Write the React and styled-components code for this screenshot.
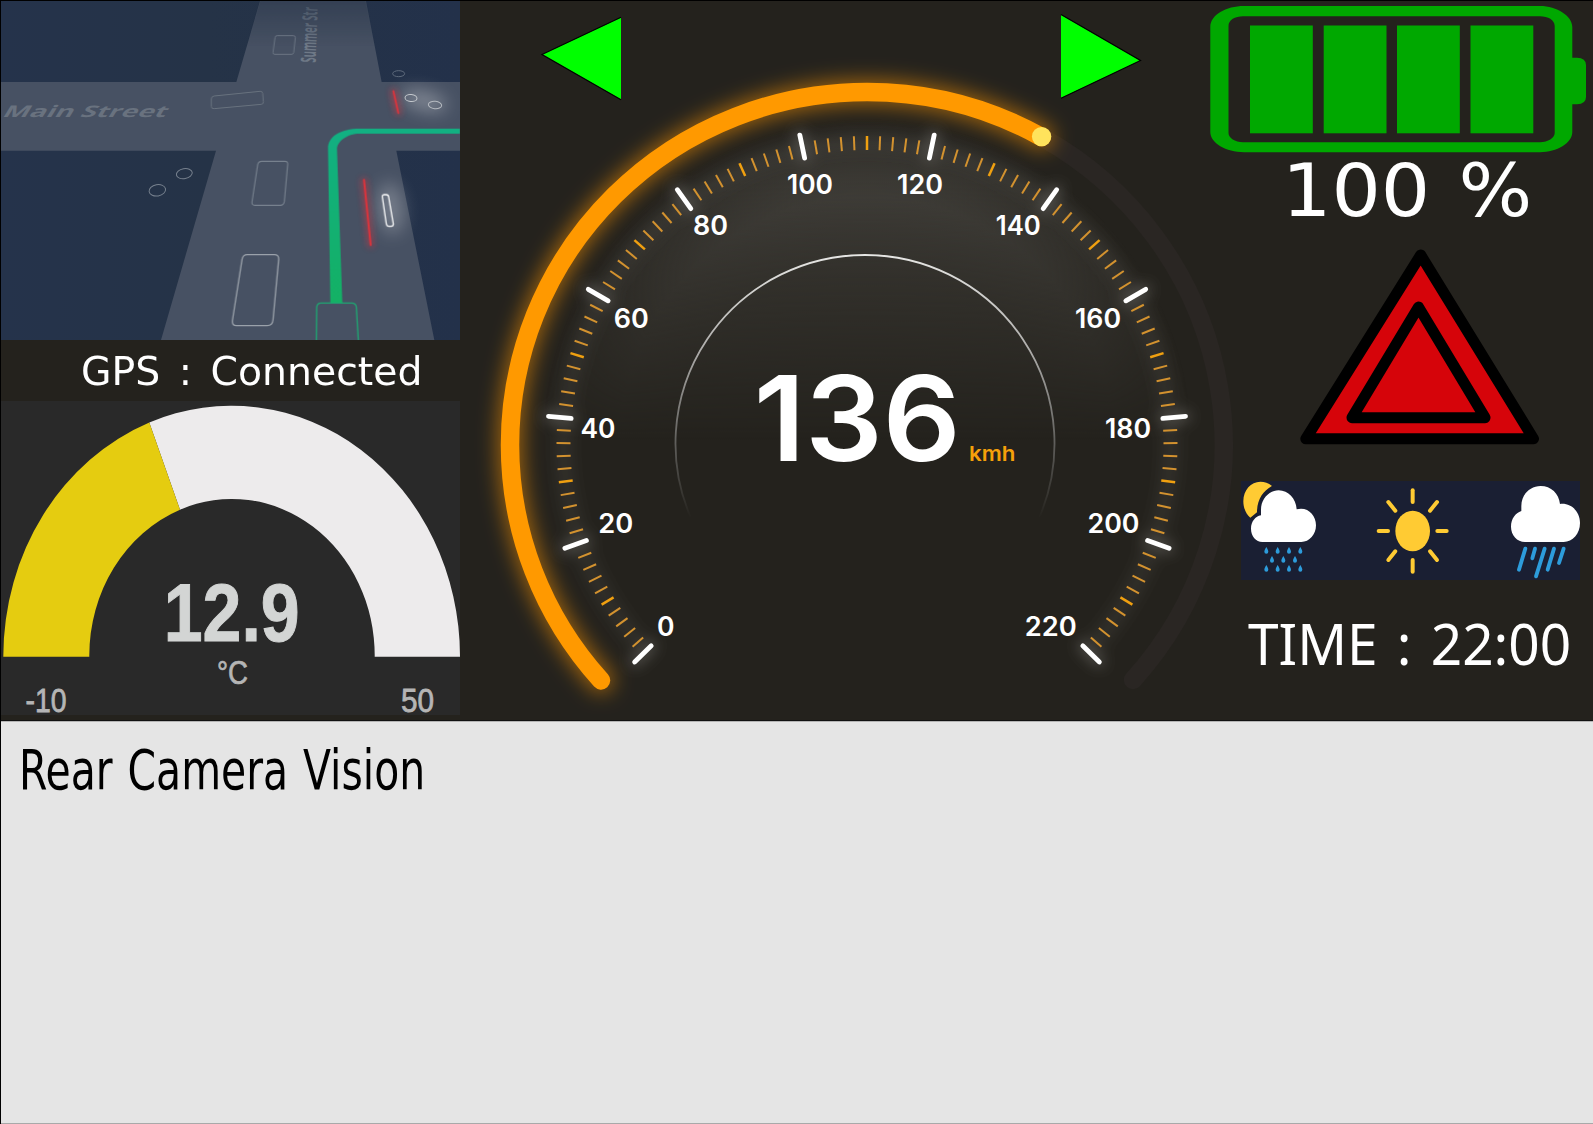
import React from "react";
import styled, { createGlobalStyle } from "styled-components";

const GlobalStyle = createGlobalStyle`
  *, *::before, *::after { box-sizing: border-box; }
  html, body { margin: 0; padding: 0; background: #24221d; overflow: hidden; }
  svg { display: block; }
`;

const uiFont = `Verdana, "DejaVu Sans", sans-serif`;

const Screen = styled.div`
  width: 1593px;
  height: 1124px;
  display: grid;
  grid-template-rows: 720px 1fr;
  border: solid #000;
  border-width: 1px 0 0 1px;
  background: #24221d;
  overflow: hidden;
`;

const Dashboard = styled.main`
  display: grid;
  grid-template-columns: 459px 744px 1fr;
  border-bottom: 1px solid #111;
`;

const SideColumn = styled.section`
  display: flex;
  flex-direction: column;
  position: relative;
  z-index: 1;
`;

const InfoColumn = styled(SideColumn)`
  padding: 5px 0 0 6px;
`;

const Label = styled.span`
  display: block;
  width: max-content;
  font-family: ${(p) => p.$font || uiFont};
  font-size: ${(p) => p.$size}px;
  line-height: ${(p) => p.$line}px;
  color: ${(p) => p.$color || "#fff"};
  white-space: pre;
  word-spacing: ${(p) => p.$gap || 0}px;
  margin-left: ${(p) => p.$indent}px;
  transform: scaleX(${(p) => p.$stretch});
  transform-origin: left center;
`;

const Map = styled.svg`
  width: 459px;
  height: 339px;
`;

const GpsStatus = styled.div`
  height: 61px;
  padding-top: 9px;
`;

const Thermometer = styled.svg`
  width: 459px;
  height: 314px;
  background: #292929;
  overflow: visible;
`;

const Cluster = styled.section`
  display: grid;
  grid-template: 719px / 744px;
`;

const Speedometer = styled.svg`
  grid-area: 1 / 1;
  width: 744px;
  height: 719px;
  overflow: visible;
`;

const Indicators = styled.div`
  grid-area: 1 / 1;
  align-self: start;
  display: flex;
  justify-content: space-between;
  padding: 12px 62px 0 79px;
`;

const Arrow = styled.svg`
  width: 83px;
  height: 89px;
`;

const Battery = styled.svg`
  width: 377px;
  height: 147px;
`;

const Percent = styled.div`
  height: 84px;
`;

const Hazard = styled.svg`
  width: 240px;
  height: 200px;
  margin: 8px 0 0 89px;
`;

const Weather = styled.div`
  display: flex;
  justify-content: space-between;
  width: 339px;
  height: 99px;
  margin: 36px 0 0 31px;
  background: #1a1f33;
`;

const WeatherIcon = styled.svg`
  width: ${(p) => p.$width}px;
  height: 99px;
`;

const Clock = styled.div`
  margin-top: 25px;
`;

const Camera = styled.section`
  background: #e5e5e5;
  border-top: 1px solid #b4b4b4;
  border-bottom: 1px solid #a9a9a9;
  padding: 15px 0 0 17px;
`;

const rad = (d) => (d * Math.PI) / 180;
const CX = 867;
const CY = 444.5;
const dialPoint = (value, rx, ry) => {
  const a = rad(((value - 110) * 133.4) / 110);
  return [CX + Math.sin(a) * rx, CY - Math.cos(a) * ry];
};

const tickLine = (value) => {
  const major = value % 20 === 0;
  const [x1, y1] = major ? dialPoint(value, 319.8, 316.5) : dialPoint(value, 310.5, 308.5);
  const [x2, y2] = major ? dialPoint(value, 297, 293) : dialPoint(value, 296.5, 294.5);
  return { value, major, mid: value % 10 === 0, x1, y1, x2, y2 };
};

const ticks = Array.from({ length: 111 }, (_, i) => tickLine(i * 2));

const speedArc =
  "M601 680.4 A357 353 0 0 1 510 445 A357 353 0 0 1 867 92 A357 353 0 0 1 1041.7 137.1";

const dialLabels = [
  [0, 665.7, 635.5, 17.5],
  [20, 615.7, 532.5, 35],
  [40, 597.9, 437.7, 35],
  [60, 631.3, 327.6, 35],
  [80, 710.5, 235, 35],
  [100, 810, 194, 46],
  [120, 920, 194, 46],
  [140, 1018.3, 235, 45],
  [160, 1098, 327.6, 46],
  [180, 1128, 437.7, 46],
  [200, 1113.5, 532.5, 52],
  [220, 1050.8, 635.5, 52],
];

function Dial() {
  return (
    <Speedometer viewBox="460 1 744 719">
      <defs>
        <radialGradient id="sheen" gradientUnits="userSpaceOnUse" cx="867" cy="444" r="325">
          <stop offset="0" stopColor="#3f3d38" stopOpacity="0.75" />
          <stop offset="0.55" stopColor="#3f3d38" stopOpacity="0.85" />
          <stop offset="0.76" stopColor="#3f3d38" />
          <stop offset="0.88" stopColor="#3f3d38" stopOpacity="0.65" />
          <stop offset="1" stopColor="#3f3d38" stopOpacity="0" />
        </radialGradient>
        <linearGradient id="fade" gradientUnits="userSpaceOnUse" x1="0" y1="180" x2="0" y2="440">
          <stop offset="0" stopColor="#fff" />
          <stop offset="0.3" stopColor="#b4b4b4" />
          <stop offset="0.65" stopColor="#5c5c5c" />
          <stop offset="1" stopColor="#000" />
        </linearGradient>
        <mask id="topLight" maskUnits="userSpaceOnUse" x="530" y="110" width="680" height="340">
          <rect x="530" y="110" width="680" height="340" fill="url(#fade)" />
        </mask>
        <linearGradient id="ring" gradientUnits="userSpaceOnUse" x1="0" y1="255" x2="0" y2="518">
          <stop offset="0" stopColor="#e6e6e4" />
          <stop offset="0.35" stopColor="#b0afad" />
          <stop offset="0.7" stopColor="#63625f" />
          <stop offset="1" stopColor="#24221d" />
        </linearGradient>
        <filter id="arcGlow" filterUnits="userSpaceOnUse" x="440" y="30" width="680" height="730">
          <feGaussianBlur stdDeviation="10" />
        </filter>
        <filter id="tickGlow" filterUnits="userSpaceOnUse" x="500" y="80" width="740" height="640">
          <feGaussianBlur stdDeviation="7" />
        </filter>
      </defs>
      <circle cx="867" cy="444" r="325" fill="url(#sheen)" mask="url(#topLight)" />
      <path d="M1041.7 137.2 A357 353 0 0 1 1133 680" fill="none" stroke="#2a2623" strokeWidth="18.5" strokeLinecap="round" />
      <g filter="url(#tickGlow)" stroke="#77756f" strokeLinecap="round">
        {ticks.map((t) => (
          <line key={t.value} x1={t.x1} y1={t.y1} x2={t.x2} y2={t.y2} strokeWidth={t.major ? 10 : 4} strokeOpacity={t.major ? 0.6 : 0.5} />
        ))}
      </g>
      <path d={speedArc} fill="none" stroke="#ff9800" strokeOpacity="0.55" strokeWidth="25" strokeLinecap="round" filter="url(#arcGlow)" />
      <path d={speedArc} fill="none" stroke="#ff9900" strokeWidth="18.5" strokeLinecap="round" />
      <circle cx="1041.6" cy="136.6" r="9.7" fill="#ffe35c" />
      {ticks.map((t) => (
        <line
          key={t.value}
          x1={t.x1}
          y1={t.y1}
          x2={t.x2}
          y2={t.y2}
          stroke={t.major ? "#fff" : t.mid ? "#f0a010" : "#d3922f"}
          strokeWidth={t.major ? 4.8 : t.mid ? 2.5 : 2}
          strokeLinecap={t.major ? "round" : "butt"}
        />
      ))}
      <path d="M690.5 517 A189.5 188.5 0 1 1 1039.5 517" fill="none" stroke="url(#ring)" strokeWidth="1.8" />
      <g fill="#fff" fontFamily="Inter, sans-serif" fontWeight="600" textAnchor="middle">
        {dialLabels.map(([v, x, y, w]) => (
          <text key={v} x={x} y={y} fontSize="26.5" textLength={w} lengthAdjust="spacingAndGlyphs">{v}</text>
        ))}
        <text x="857.3" y="460.5" fontSize="118" textLength="207" lengthAdjust="spacingAndGlyphs">136</text>
        <text x="992.3" y="461" fontSize="20.5" fill="#f5a00a" textLength="46.5" lengthAdjust="spacingAndGlyphs">kmh</text>
      </g>
    </Speedometer>
  );
}

const trafficBox = { fill: "none", strokeLinejoin: "round" };

function Navigation() {
  return (
    <Map viewBox="3 3 1377 1017" preserveAspectRatio="none">
      <defs>
        <linearGradient id="land" x1="0" y1="0" x2="1" y2="0">
          <stop offset="0" stopColor="#25334b" />
          <stop offset="0.45" stopColor="#253347" />
          <stop offset="1" stopColor="#23314a" />
        </linearGradient>
        <linearGradient id="haze" x1="0" y1="0" x2="0" y2="1">
          <stop offset="0" stopColor="#253347" stopOpacity="0.55" />
          <stop offset="1" stopColor="#253347" stopOpacity="0" />
        </linearGradient>
        <linearGradient id="route" gradientUnits="userSpaceOnUse" x1="0" y1="386" x2="0" y2="909">
          <stop offset="0" stopColor="#12b083" />
          <stop offset="1" stopColor="#14b165" />
        </linearGradient>
        <filter id="soft" x="-100%" y="-50%" width="300%" height="200%">
          <feGaussianBlur stdDeviation="26" />
        </filter>
        <filter id="redSoft" filterUnits="userSpaceOnUse" x="1030" y="220" width="260" height="580">
          <feGaussianBlur stdDeviation="9" />
        </filter>
      </defs>
      <rect x="3" y="3" width="1377" height="1017" fill="url(#land)" />
      <path d="M780 3 H1098 L1145 246 H1380 V452 H1189 L1303 1020 H483 L648 452 H3 V246 H709 Z" fill="#475163" />
      <g fill="#fff" filter="url(#soft)">
        <ellipse cx="1272" cy="302" rx="70" ry="28" transform="rotate(14 1272 302)" opacity="0.32" />
        <ellipse cx="1172" cy="625" rx="38" ry="78" transform="rotate(-6 1172 625)" opacity="0.26" />
      </g>
      <text transform="translate(4 350) skewX(-32)" fontFamily='"Open Sans", sans-serif' fontWeight="700" fontSize="48" fill="#69727f" textLength="490" lengthAdjust="spacingAndGlyphs">Main Street</text>
      <text transform="translate(947 188) rotate(-88)" fontFamily='"Open Sans", sans-serif' fontWeight="700" fontSize="63" fill="#6f7987" textLength="166" lengthAdjust="spacingAndGlyphs">Summer Str</text>
      <path d="M780 3 H1098 L1125 140 H740 Z" fill="url(#haze)" />
      <g {...trafficBox} strokeWidth="3" stroke="#77818e">
        <path d="M831 107 H880 Q886 107 886 113 L881 158 Q880 163 875 163 H824 Q818 163 819 157 L825 113 Q826 107 831 107Z" stroke="#6b7583" />
        <path d="M642 288 L780 274 Q787 273 788 280 L790 305 Q791 312 784 313 L642 326 Q634 327 634 319 V297 Q634 289 642 288Z" stroke="#69737f" />
        <path d="M785 484 H855 Q864 484 863 493 L853 605 Q851 616 841 616 H764 Q755 616 756 606 L773 494 Q775 484 785 484Z" strokeWidth="3.5" />
        <path d="M742 764 H823 Q837 764 836 778 L819 960 Q817 977 802 977 H709 Q696 977 697 963 L726 779 Q728 764 742 764Z" stroke="#9aa1aa" strokeWidth="4" />
        <ellipse cx="553" cy="521" rx="24" ry="15" transform="rotate(-10 553 521)" />
        <ellipse cx="472" cy="571" rx="25" ry="17" transform="rotate(-10 472 571)" />
        <ellipse cx="1196" cy="221" rx="18" ry="9" stroke="#5f6b7c" />
        <ellipse cx="1233" cy="294" rx="18" ry="10.5" transform="rotate(6 1233 294)" stroke="#c4c8cd" />
        <ellipse cx="1305" cy="315" rx="20" ry="11" transform="rotate(6 1305 315)" stroke="#b6bbc1" />
        <path d="M1151 584 H1159 Q1165 584 1166 591 L1180 672 Q1180 679 1174 679 H1166 Q1160 678 1159 672 L1147 591 Q1146 585 1151 584Z" stroke="#fff" strokeWidth="3.8" />
      </g>
      <g stroke="#dc343c" strokeLinecap="round">
        <g filter="url(#redSoft)" strokeWidth="18" strokeOpacity="0.5">
          <line x1="1180" y1="275" x2="1195" y2="338" />
          <line x1="1092" y1="542" x2="1112" y2="734" />
        </g>
        <line x1="1180" y1="273" x2="1195" y2="339" strokeWidth="5.5" />
        <line x1="1092" y1="540" x2="1112" y2="735" strokeWidth="6" />
      </g>
      <path d="M991 909 L984 445 C984 410 1020 386 1080 386 H1380 V401 H1080 C1040 401 1011 425 1011 448 L1027 909 Z" fill="url(#route)" />
      <path d="M949 1022 L950 922 Q951 909 963 909 H1055 Q1068 909 1069 922 L1075 1022" fill="none" stroke="#1fa873" strokeWidth="4" />
    </Map>
  );
}

function Temperature() {
  return (
    <Thermometer viewBox="1 401 459 314">
      <path d="M149.3 422.5 A228.5 251 0 0 1 460 656.7 H374.7 A142.7 156.7 0 0 0 180 509.7 Z" fill="#edebec" />
      <path d="M3.3 656.7 A228.5 251 0 0 1 149.3 422.5 L180 509.7 A142.7 156.7 0 0 0 89.3 656.7 Z" fill="#e5cc10" />
      <g fontFamily='"Liberation Sans", Arial, sans-serif' textAnchor="middle" fill="#b5b5b5">
        <text x="231.7" y="641.3" fontSize="81" fontWeight="700" fill="#d3d5d4" stroke="#d3d5d4" strokeWidth="1" textLength="136" lengthAdjust="spacingAndGlyphs">12.9</text>
        <text x="232.5" y="684" fontSize="33" stroke="#b5b5b5" strokeWidth="0.7" textLength="31" lengthAdjust="spacingAndGlyphs">°C</text>
        <text x="46" y="712" fontSize="33.5" stroke="#b5b5b5" strokeWidth="0.8" textLength="41" lengthAdjust="spacingAndGlyphs">-10</text>
        <text x="417.5" y="712" fontSize="33.5" stroke="#b5b5b5" strokeWidth="0.8" textLength="33" lengthAdjust="spacingAndGlyphs">50</text>
      </g>
    </Thermometer>
  );
}

const drops = [
  [199, 272], [233, 272], [267, 272], [301, 272],
  [216, 299], [250, 299], [285, 299],
  [199, 326], [233, 326], [267, 326], [301, 326],
];

const rays = [
  [638, 92, 638, 127], [638, 301, 638, 336], [536, 214, 564, 214], [712, 214, 740, 214],
  [565, 127, 586, 153], [711, 127, 690, 153], [565, 301, 586, 275], [711, 301, 690, 275],
];

const streaks = [
  [976, 267, 957, 330], [1005, 267, 997, 296], [1034, 267, 1008, 350], [1062, 267, 1043, 330], [1091, 267, 1077, 310],
];

function Forecast() {
  return (
    <Weather>
      <WeatherIcon $width={80} viewBox="123 64 240 297">
        <path d="M216 79 C205 69 194 66 181 66 C153 66 130 91 130 125 C130 145 138 163 151 174 L171 158 C171 120 188 95 216 79Z" fill="#ffcb33" />
        <path d="M187 247 C168 247 153 229 153 207 C153 186 166 170 183 167 V150 C183 118 207 92 236 92 C265 92 288 117 290 149 C323 140 348 166 348 197 C348 225 328 247 304 247Z" fill="#fff" />
        {drops.map(([x, y]) => (
          <path key={`${x}-${y}`} transform={`translate(${x} ${y})`} d="M0 -10 C2 -6 6 -1 6 4 A6 6 0 0 1 -6 4 C-6 -1 -2 -6 0 -10Z" fill="#2d9cdb" />
        ))}
      </WeatherIcon>
      <WeatherIcon $width={77} viewBox="528 64 231 297">
        <ellipse cx="638" cy="214" rx="52" ry="61" fill="#ffcb33" />
        {rays.map(([x1, y1, x2, y2]) => (
          <line key={`${x1}-${y1}`} x1={x1} y1={y1} x2={x2} y2={y2} stroke="#ffcb33" strokeWidth="12" strokeLinecap="round" />
        ))}
      </WeatherIcon>
      <WeatherIcon $width={72} viewBox="924 64 216 297">
        <path d="M975 247 C951 247 933 226 933 201 C933 178 946 160 964 154 V139 C964 105 990 79 1022 79 C1053 79 1077 102 1080 133 C1113 129 1140 155 1140 190 C1140 222 1118 247 1091 247Z" fill="#fff" />
        {streaks.map(([x1, y1, x2, y2]) => (
          <line key={x1} x1={x1} y1={y1} x2={x2} y2={y2} stroke="#2d9cdb" strokeWidth="11.5" strokeLinecap="round" />
        ))}
      </WeatherIcon>
    </Weather>
  );
}

export default function App() {
  return (
    <>
      <GlobalStyle />
      <Screen>
        <Dashboard>
          <SideColumn>
            <Navigation />
            <GpsStatus>
              <Label $size={39.2} $line={46} $indent={80} $stretch={1.004} $gap={6}>GPS : Connected</Label>
            </GpsStatus>
            <Temperature />
          </SideColumn>

          <Cluster>
            <Dial />
            <Indicators>
              <Arrow viewBox="539 13 83 89">
                <path d="M621 17.5 L542 54.5 L621 99.5 Z" fill="#0f0" />
                <path d="M621 17.3 L542 54.5 L621 99.7" fill="none" stroke="#000" strokeWidth="1.2" />
              </Arrow>
              <Arrow viewBox="1059 13 83 89">
                <path d="M1061 14.7 L1140.5 60.5 L1061 98 Z" fill="#0f0" />
                <path d="M1061 14.5 L1140.5 60.5 L1061 98.2" fill="none" stroke="#000" strokeWidth="1.2" />
              </Arrow>
            </Indicators>
          </Cluster>

          <InfoColumn>
            <Battery viewBox="1210 6 377 147">
              <path
                fillRule="evenodd"
                fill="#00a800"
                d="M1244 6 H1540 C1557 6 1572.3 16 1572.3 27 V57.7 H1577 Q1586 58 1586 65 V97 Q1586 104 1577 104.2 H1572.3 V132 C1572.3 143 1557 152.2 1540 152.2 H1244 C1226 152.2 1210.3 143 1210.3 132 V27 C1210.3 15 1226 6 1244 6 Z M1243 16.3 C1235 16.3 1228.5 20 1228.5 26 V133 C1228.5 138 1235 142.2 1243 142.2 H1540 C1548 142.2 1554.7 138 1554.7 133 V26 C1554.7 20 1548 16.3 1540 16.3 Z"
              />
              {[1250, 1323.7, 1397, 1470.5].map((x) => (
                <rect key={x} x={x} y="25.5" width="62.8" height="107.8" fill="#00a800" />
              ))}
            </Battery>
            <Percent>
              <Label $size={73.6} $line={75} $indent={71.5} $stretch={1.055} $gap={3.5}>100 %</Label>
            </Percent>
            <Hazard viewBox="1299 245 240 200">
              <g stroke="#000" strokeWidth="11" strokeLinejoin="round" fill="#d6040a">
                <path d="M1420.7 255 L1533.5 438.8 H1305.8 Z" />
                <path d="M1418.5 307 L1485 417.7 H1352 Z" />
              </g>
            </Hazard>
            <Forecast />
            <Clock>
              <Label $font={`"Noto Sans", Verdana, sans-serif`} $size={57} $line={76} $indent={38} $stretch={0.965} $gap={5}>TIME : 22:00</Label>
            </Clock>
          </InfoColumn>
        </Dashboard>

        <Camera>
          <Label $size={55} $line={66} $indent={1} $stretch={0.744} $gap={2.5} $color="#000">Rear Camera Vision</Label>
        </Camera>
      </Screen>
    </>
  );
}
